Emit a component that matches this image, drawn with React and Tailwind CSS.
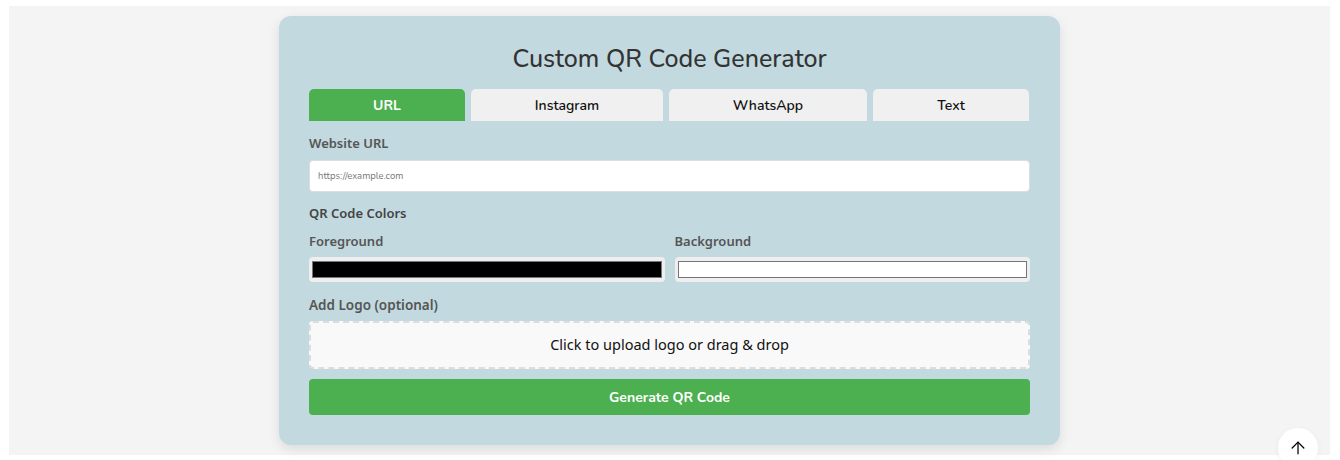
import { ArrowUp } from 'lucide-react';

const tabs = [
    { label: 'URL', width: 'w-[156px]', active: true },
    { label: 'Instagram', width: 'w-[192px]' },
    { label: 'WhatsApp', width: 'w-[198px]' },
    { label: 'Text', width: 'w-[156px]' },
];

const ColorBox = ({ swatch }) => (
    <div className="h-[25px] rounded-[4px] bg-[#eeeeee] px-[3px] py-[4px] flex">
        <div className={`flex-1 border border-[#767676] ${swatch}`}></div>
    </div>
);

const App = () => {
    return (
        <div className="bg-white min-h-[460px] pl-[9px] pr-[10px] pt-[6px] font-['Segoe_UI','Noto_Sans',sans-serif]">
            <div className="bg-[#f4f4f4] h-[449px] pt-[10px] flex justify-center">
                <div className="w-[781px] h-[429px] bg-[#c2d9df] rounded-[12px] shadow-[0_4px_12px_rgba(0,0,0,0.1)] px-[30px] pt-[26px]">
                    <h1 className="text-center text-[25px] leading-[34px] font-['Nunito','Lato',sans-serif] font-medium text-[#333]">
                        Custom QR Code Generator
                    </h1>
                    <div className="flex gap-[6px] mt-[13px]">
                        {tabs.map((tab) => (
                            <div
                                key={tab.label}
                                className={`${tab.width} h-[32px] rounded-t-[5px] flex items-center justify-center text-[14px] font-['Nunito','Lato',sans-serif] ${
                                    tab.active ? 'bg-[#4caf50] text-white font-bold' : 'bg-[#f0f0f0] text-[#111] font-semibold'
                                }`}
                            >
                                {tab.label}
                            </div>
                        ))}
                    </div>

                    <div className="mt-[13px] text-[13px] leading-[18px] font-semibold text-[#555]">Website URL</div>
                    <div className="mt-[8px] h-[32px] bg-white rounded-[4px] border border-[#dddddd] flex items-center px-[8px]">
                        <span className="text-[9.5px] text-[#777] font-['Nunito','Lato',sans-serif]">https://example.com</span>
                    </div>

                    <div className="mt-[12px] text-[13px] leading-[18px] font-semibold text-[#444]">QR Code Colors</div>
                    <div className="flex gap-[10px] mt-[10px]">
                        <div className="flex-1">
                            <div className="text-[13px] leading-[18px] font-semibold text-[#555]">Foreground</div>
                            <div className="mt-[7px]">
                                <ColorBox swatch="bg-black" />
                            </div>
                        </div>
                        <div className="flex-1">
                            <div className="text-[13px] leading-[18px] font-semibold text-[#555]">Background</div>
                            <div className="mt-[7px]">
                                <ColorBox swatch="bg-white" />
                            </div>
                        </div>
                    </div>

                    <div className="mt-[14px] text-[13.5px] leading-[18px] font-semibold text-[#555]">Add Logo (optional)</div>
                    <div className="mt-[7px] h-[48px] rounded-[4px] border-2 border-dashed border-[#dddddd] bg-[#f9f9f9] flex items-center justify-center text-[14.5px] text-[#111]">
                        Click to upload logo or drag &amp; drop
                    </div>

                    <button className="mt-[10px] w-full h-[36px] rounded-[4px] bg-[#4caf50] text-white text-[14px] font-bold font-['Nunito','Lato',sans-serif]">
                        Generate QR Code
                    </button>
                </div>
            </div>
            <button className="fixed left-[1278px] top-[428px] w-[40px] h-[40px] rounded-full bg-white flex items-center justify-center shadow-[0_2px_6px_rgba(0,0,0,0.05)]">
                <ArrowUp className="w-[20px] h-[20px] text-black" strokeWidth={1.5} />
            </button>
        </div>
    );
};

export default App;
